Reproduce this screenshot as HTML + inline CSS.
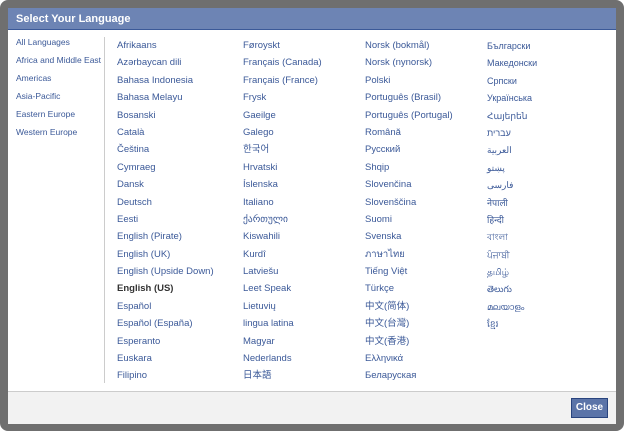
<!DOCTYPE html><html><head><meta charset="utf-8"><style>
body{margin:0;width:624px;height:431px;background:#fff;font-family:"Liberation Sans","Noto Sans CJK SC",sans-serif;overflow:hidden}
.frame{position:absolute;left:0;top:0;width:608px;height:415px;border:8px solid #6f6f6f;border-radius:8px;background:#fff}
.hd{position:absolute;left:0;top:0;width:608px;height:22px;background:#6d84b4;border-bottom:1px solid #3b5998;color:#fff;font-weight:bold;font-size:11px;line-height:22px;padding-left:8px;box-sizing:border-box}
.nav{position:absolute;left:8px;top:29px;font-size:8.5px;color:#3b5998}
.nav div{height:18px;line-height:11px;white-space:nowrap}
.div{position:absolute;left:96px;top:29px;width:1px;height:346px;background:#ccc}
.col{position:absolute;top:32px;font-size:9.5px;color:#3b5998}
.col div{height:17.4px;line-height:12px;white-space:nowrap;overflow:visible}
.ft{position:absolute;left:0;top:383px;width:608px;height:32px;background:#f2f2f2;border-top:1px solid #ccc}
.btn{position:absolute;left:563px;top:6px;width:35px;height:18px;background:#5b74a8;border:1px solid #29447e;color:#fff;font-weight:bold;font-size:10px;line-height:18px;text-align:center}
</style></head><body><div class="frame">
<div class="hd">Select Your Language</div>
<div class="nav"><div>All Languages</div><div>Africa and Middle East</div><div>Americas</div><div>Asia-Pacific</div><div>Eastern Europe</div><div>Western Europe</div></div>
<div class="div"></div>
<div class="col" style="left:109px"><div>Afrikaans</div><div>Azərbaycan dili</div><div>Bahasa Indonesia</div><div>Bahasa Melayu</div><div>Bosanski</div><div>Català</div><div>Čeština</div><div>Cymraeg</div><div>Dansk</div><div>Deutsch</div><div>Eesti</div><div>English (Pirate)</div><div>English (UK)</div><div>English (Upside Down)</div><div style="font-weight:bold;color:#333">English (US)</div><div>Español</div><div>Español (España)</div><div>Esperanto</div><div>Euskara</div><div>Filipino</div></div>
<div class="col" style="left:235px"><div>Føroyskt</div><div>Français (Canada)</div><div>Français (France)</div><div>Frysk</div><div>Gaeilge</div><div>Galego</div><div>한국어</div><div>Hrvatski</div><div>Íslenska</div><div>Italiano</div><div>ქართული</div><div>Kiswahili</div><div>Kurdî</div><div>Latviešu</div><div>Leet Speak</div><div>Lietuvių</div><div>lingua latina</div><div>Magyar</div><div>Nederlands</div><div>日本語</div></div>
<div class="col" style="left:357px"><div>Norsk (bokmål)</div><div>Norsk (nynorsk)</div><div>Polski</div><div>Português (Brasil)</div><div>Português (Portugal)</div><div>Română</div><div>Русский</div><div>Shqip</div><div>Slovenčina</div><div>Slovenščina</div><div>Suomi</div><div>Svenska</div><div>ภาษาไทย</div><div>Tiếng Việt</div><div>Türkçe</div><div>中文(简体)</div><div>中文(台灣)</div><div>中文(香港)</div><div>Ελληνικά</div><div>Беларуская</div></div>
<div class="col" style="left:479px;font-size:9px"><div>Български</div><div>Македонски</div><div>Српски</div><div>Українська</div><div>Հայերեն</div><div>עברית</div><div>العربية</div><div>پښتو</div><div>فارسی</div><div>नेपाली</div><div>हिन्दी</div><div>বাংলা</div><div>ਪੰਜਾਬੀ</div><div>தமிழ்</div><div>తెలుగు</div><div>മലയാളം</div><div>ខ្មែរ</div></div>
<div class="ft"><div class="btn">Close</div></div>
</div></body></html>
